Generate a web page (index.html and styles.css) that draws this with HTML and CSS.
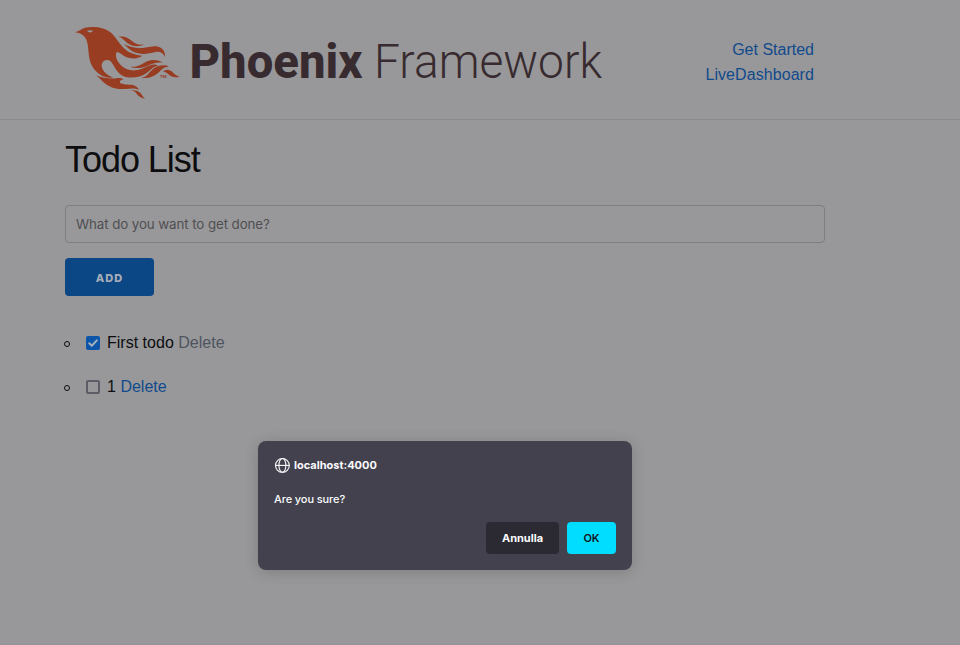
FILE: index.html
```html
<!DOCTYPE html>
<html lang="en">
<head>
<meta charset="utf-8">
<title>Todo List</title>
<link rel="stylesheet" href="styles.css">
</head>
<body>
<header class="header">
  <div class="container header-row">
    <svg class="logo" width="600" height="95" viewBox="0 0 600 95" aria-label="Phoenix Framework">
      <g class="bird" transform="scale(.33333)">
        <path fill-rule="evenodd" d="M30 52C43 48 50 42 60 38C85 33 120 36 140 55C157 72 165 90 179 102C193 114 210 120 232 122C220 131 200 133 185 127C172 121 165 112 156 110C149 120 154 135 165 148C178 163 196 168 212 166C234 163 245 152 262 149C270 148 275 150 279 152C264 154 257 165 246 173C225 188 195 192 174 183C153 173 147 149 137 139C127 131 112 136 110 149C109 164 122 180 145 187C121 192 101 179 87 162C69 139 72 111 68 88C65 71 57 55 30 52ZM66 47Q75 44 84 47Q80 55 70 51Z"/>
        <path d="M160 65C177 62 190 68 201 78C213 88 223 91 238 88C226 96 206 96 193 88C179 80 175 68 160 65Z"/>
        <path d="M177 87C194 96 215 101 232 99C252 97 264 91 279 95C295 99 301 111 300 126C295 115 285 109 272 111C254 115 238 119 219 115C201 111 189 100 177 87Z"/>
        <path d="M197 155C216 157 229 148 243 140C260 132 282 133 294 144C279 140 266 145 253 150C235 159 211 163 197 155Z"/>
        <path d="M229 188C245 188 251 174 263 163C277 150 300 147 311 155C296 155 289 165 279 174C264 187 245 192 229 188Z"/>
        <path d="M294 170C303 162 315 163 323 172C331 181 336 182 344 185C331 189 319 186 310 178C303 171 300 170 294 170Z"/>
        <path d="M93 181C113 190 136 192 154 190C164 188 170 190 176 193C168 195 163 198 165 203C173 209 190 208 203 210C212 212 218 217 222 224C207 218 195 221 179 222C153 224 137 217 123 208C110 200 106 189 93 181Z"/>
        <path d="M197 226C210 225 220 227 227 235C232 241 234 247 240 252C228 249 221 245 216 238C211 230 206 228 197 226Z"/>
        <text class="mark" x="285" y="190" textLength="20" lengthAdjust="spacingAndGlyphs">TM</text>
      </g>
      <text class="word bold" x="124.5" y="62.5" textLength="173" lengthAdjust="spacingAndGlyphs">Phoenix</text>
      <text class="word light" x="309" y="62.5" textLength="228" lengthAdjust="spacingAndGlyphs">Framework</text>
    </svg>
    <nav class="nav"><a class="start">Get Started</a><a>LiveDashboard</a></nav>
  </div>
</header>
<main class="container">
  <h1>Todo List</h1>
  <input class="field" type="text" placeholder="What do you want to get done?">
  <button class="add">ADD</button>
  <ul class="todos">
    <li><i class="bullet"></i><span class="box checked"><svg width="14" height="14" viewBox="0 0 14 14"><path d="M3.3 7.3L5.8 9.8L10.8 4.3"/></svg></span><span class="todo">First todo <a class="muted">Delete</a></span></li>
    <li><i class="bullet"></i><span class="box"></span><span class="todo">1 <a>Delete</a></span></li>
  </ul>
</main>
<div class="dialog">
  <div class="host"><svg width="16" height="16" viewBox="0 0 16 16"><circle cx="8.4" cy="8.4" r="6.9"/><ellipse cx="8.4" cy="8.4" rx="3.5" ry="6.9"/><path d="M1.5 8.4H15.3"/></svg><span>localhost:4000</span></div>
  <p>Are you sure?</p>
  <div class="actions"><button class="cancel">Annulla</button><button class="ok">OK</button></div>
</div>
</body>
</html>
```
FILE: styles.css
```css
* { box-sizing: border-box; }
body {
  margin: 0;
  height: 645px;
  overflow: hidden;
  background: #98989a;
  color: #0d0d10;
  font: 16px/25px "Liberation Sans", sans-serif;
  border-bottom: 1px solid #929193;
}
.container { width: 760px; margin-left: 65px; }
.header { height: 120px; border-bottom: 1px solid #8b8b8e; }
.header-row { display: flex; justify-content: space-between; padding-top: 15px; }
.logo { display: block; overflow: visible; }
.bird { fill: #983c22; }
.mark { font: bold 12px "Liberation Sans", sans-serif; }
.word { font-family: Roboto, sans-serif; font-size: 48.5px; fill: #382b2f; }
.bold { font-weight: 800; }
.light { font-weight: 300; }
.nav { display: flex; flex-direction: column; align-items: flex-end; padding: 22px 11px 0 0; letter-spacing: .07px; }
.start { letter-spacing: 0; }
a { color: #104a8c; }
h1 { margin: 17px 0 23px; font-size: 36px; line-height: 45px; font-weight: 400; letter-spacing: -1.05px; }
.field {
  display: block;
  width: 760px;
  height: 38px;
  padding: 0 10px;
  border: 1px solid #7e7e81;
  border-radius: 4px;
  background: transparent;
  font: 13.33px Inter, sans-serif;
  letter-spacing: -.09px;
}
.field::placeholder { color: #4f4f53; opacity: 1; }
.add {
  display: block;
  width: 89px;
  height: 38px;
  margin-top: 15px;
  padding: 2px 0 0;
  border: 0;
  border-radius: 4px;
  background: #0b4685;
  color: #a6adb8;
  font: 800 11px Inter, sans-serif;
  letter-spacing: 1px;
}
.todos { margin: 34px 0 0; padding: 0; list-style: none; }
.todos li { display: flex; align-items: center; height: 25px; margin-bottom: 19px; }
.bullet { width: 6px; height: 6px; margin: 2px 15px 0 -1px; border: 1px solid #0d0d10; border-radius: 50%; }
.box { width: 14px; height: 14px; margin: 1px 7px 0 1px; border: 2px solid #5d5b65; border-radius: 2px; }
.checked { border: 0; background: #0d55a8; }
.checked svg { display: block; fill: none; stroke: #a7b0bc; stroke-width: 2; stroke-linecap: round; stroke-linejoin: round; }
.todo { letter-spacing: .01px; }
.todos .muted { color: #4e5560; }
.dialog {
  position: absolute;
  left: 258px;
  top: 441px;
  width: 374px;
  height: 129px;
  padding: 16px;
  border-radius: 8px;
  background: #42414d;
  color: #fbfbfe;
  box-shadow: 0 2px 14px rgba(28, 27, 34, .2);
  font: 500 11px/16px Inter, sans-serif;
}
.host { display: flex; gap: 4px; font-weight: 700; }
.host svg { fill: none; stroke: #fbfbfe; stroke-width: 1.1; }
.dialog p { margin: 18px 0 15px; letter-spacing: -.1px; }
.actions { display: flex; justify-content: flex-end; gap: 8px; }
.actions button { height: 32px; padding: 0; border: 0; border-radius: 4px; font: 700 11px Inter, sans-serif; }
.cancel { width: 73px; background: #2b2a33; color: #fbfbfe; }
.actions .ok { width: 49px; background: #00ddff; color: #15141a; font-weight: 600; }
```
